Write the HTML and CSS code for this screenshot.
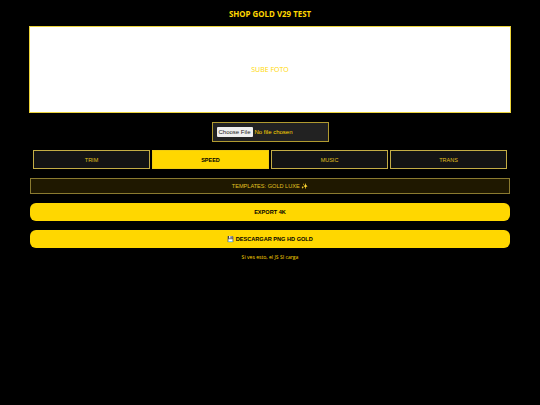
FILE: index.html
```html
<!DOCTYPE html>
<html lang="es">
<head>
  <meta charset="UTF-8" />
  <meta name="viewport" content="width=device-width, initial-scale=1.0" />
  <title>Shop Gold V29 Test</title>
  <link rel="stylesheet" href="styles.css">
</head>
<body>
  <h1 class="title">SHOP GOLD V29 TEST</h1>

  <div class="preview">SUBE FOTO</div>

  <div class="upload-row">
    <input class="file-input" type="file">
  </div>

  <div class="tabs">
    <button class="tab">TRIM</button>
    <button class="tab active">SPEED</button>
    <button class="tab">MUSIC</button>
    <button class="tab">TRANS</button>
  </div>

  <div class="templates">TEMPLATES: GOLD LUXE ✨</div>

  <button class="big-btn">EXPORT 4K</button>
  <button class="big-btn">💾 DESCARGAR PNG HD GOLD</button>

  <p class="note">Si ves esto, el JS SI carga</p>
</body>
</html>
```

FILE: styles.css
```css
* {
  margin: 0;
  padding: 0;
  box-sizing: border-box;
}

body {
  font-family: "Open Sans", sans-serif;
  background: #000;
  color: #ffd700;
  padding: 8px 29px 0;
  height: 100vh;
  overflow: hidden;
}

.title {
  font-size: 7.9px;
  line-height: 12px;
  font-weight: 700;
  text-align: center;
  height: 18px;
}

.preview {
  display: flex;
  align-items: center;
  justify-content: center;
  height: 87px;
  background: #fff;
  border: 1.5px solid #ecd43c;
  color: #ffd700;
  font-size: 7px;
}

.upload-row {
  display: flex;
  justify-content: center;
  margin-top: 9px;
}

.file-input {
  display: block;
  width: 117px;
  height: 20px;
  padding: 4px;
  background: #222;
  border: 1.5px solid #b09a30;
  color: #ffd700;
  font-family: "Liberation Sans", Arial, sans-serif;
  font-size: 6px;
}

.file-input::file-selector-button {
  width: 36px;
  height: 10px;
  margin-right: 2px;
  padding: 0;
  background: #efefef;
  border: none;
  border-radius: 1px;
  color: #222;
  font-family: "Liberation Sans", Arial, sans-serif;
  font-size: 6px;
}

.tabs {
  display: grid;
  grid-template-columns: repeat(4, 1fr);
  gap: 2px;
  margin: 8px 4px 0;
}

.tab {
  height: 19px;
  background: #141414;
  border: 1px solid #c4ad45;
  color: #e0c020;
  font-family: "Liberation Sans", Arial, sans-serif;
  font-size: 5.5px;
}

.tab.active {
  background: #ffd700;
  border-color: #f0cc10;
  color: #000;
  font-weight: 700;
}

.templates {
  height: 16px;
  margin: 9px 1px 0;
  background: #1f1800;
  border: 1px solid #8a7a30;
  color: #e0c020;
  font-family: "Liberation Sans", Arial, sans-serif;
  font-size: 5.6px;
  line-height: 14px;
  text-align: center;
}

.big-btn {
  display: block;
  width: 480px;
  height: 18px;
  margin: 9px 1px 0;
  background: #ffd700;
  border: none;
  border-radius: 6px;
  color: #000;
  font-family: "Liberation Sans", Arial, sans-serif;
  font-size: 5.6px;
  font-weight: 700;
}

.note {
  margin-top: 6px;
  font-size: 5.1px;
  line-height: 7px;
  text-align: center;
}
```
